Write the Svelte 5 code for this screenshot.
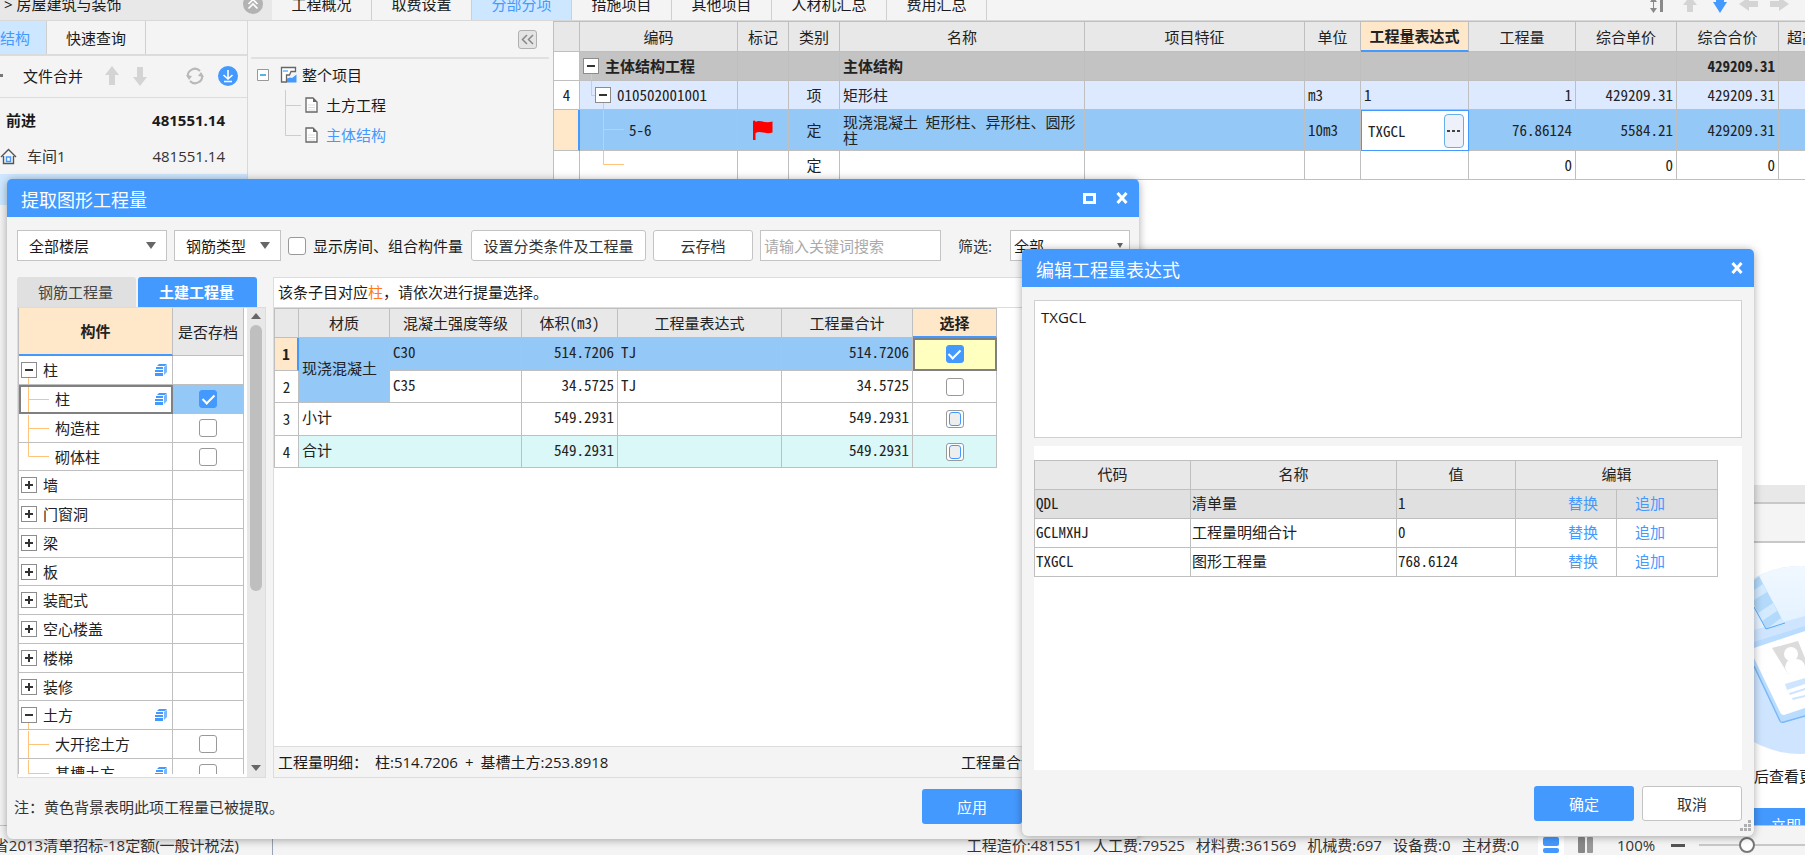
<script lang="ts">
	type Item = {
		name: string;
		state: 'open' | 'closed' | 'child' | 'last';
		icon?: boolean;
		checked?: boolean;
		active?: boolean;
	};

	const tabs = ['工程概况', '取费设置', '分部分项', '措施项目', '其他项目', '人材机汇总', '费用汇总'];
	let activeTab = $state('分部分项');

	let components: Item[] = $state([
		{ name: '柱', state: 'open', icon: true },
		{ name: '柱', state: 'child', icon: true, checked: true, active: true },
		{ name: '构造柱', state: 'child', checked: false },
		{ name: '砌体柱', state: 'last', checked: false },
		{ name: '墙', state: 'closed' },
		{ name: '门窗洞', state: 'closed' },
		{ name: '梁', state: 'closed' },
		{ name: '板', state: 'closed' },
		{ name: '装配式', state: 'closed' },
		{ name: '空心楼盖', state: 'closed' },
		{ name: '楼梯', state: 'closed' },
		{ name: '装修', state: 'closed' },
		{ name: '土方', state: 'open', icon: true },
		{ name: '大开挖土方', state: 'child', checked: false },
		{ name: '基槽土方', state: 'child', icon: true, checked: false }
	]);

	// connector lines of the component tree, one path per row kind
	const lines = {
		open: 'M9.5 20V29',
		closed: '',
		child: 'M9.5 0V29M9.5 13.5H30',
		last: 'M9.5 0V13.5H30'
	};

	const codes = [
		{ code: 'QDL', name: '清单量', value: '1' },
		{ code: 'GCLMXHJ', name: '工程量明细合计', value: '0' },
		{ code: 'TXGCL', name: '图形工程量', value: '768.6124' }
	];

	const costs = [
		['工程造价', '481551'],
		['人工费', '79525'],
		['材料费', '361569'],
		['机械费', '697'],
		['设备费', '0'],
		['主材费', '0']
	];

	let expression = $state('TXGCL');
	let keyword = $state('');
	let zoom = $state(28);

	function replace(code: string) {
		expression = code;
	}

	function append(code: string) {
		expression += '+' + code;
	}
</script>

<div class="app">
	<header class="topbar">
		<div class="crumb">
			<span>&gt; 房屋建筑与装饰</span>
			<button class="round" aria-label="收起">
				<svg width="20" height="20" viewBox="0 0 20 20">
					<circle cx="10" cy="10" r="10" fill="#b3b3b3" />
					<path d="M5.500 10L10 5.500L14.500 10M5.500 14.500L10 10L14.500 14.500" fill="none" stroke="#fff" stroke-width="1.600" />
				</svg>
			</button>
		</div>
		<nav class="tabs">
			{#each tabs as tab}
				<button class:on={tab === activeTab} class:wide={tab.length > 4} onclick={() => (activeTab = tab)}>{tab}</button>
			{/each}
		</nav>
		<div class="tools">
			<svg width="140" height="20" viewBox="0 0 140 20">
				<path d="M0 2L3.500 -3L7 2ZM0 8L3.500 13L7 8Z" fill="#8a8a8a" />
				<path d="M3.500 0V10" stroke="#8a8a8a" />
				<path d="M10 0H13V12H10Z" fill="#8a8a8a" />
				<path d="M33 5L40 -4L47 5H43V12H37V5Z" fill="#d4d4d4" />
				<path d="M63 2H66V0H74V2H77L70 13Z" fill="#4499ff" />
				<path d="M89 4L99 -3V1H108V7H99V11Z" fill="#d4d4d4" />
				<path d="M139 4L129 -3V1H120V7H129V11Z" fill="#d4d4d4" />
			</svg>
		</div>
	</header>

	<main class="work">
		<section class="project">
			<div class="subtabs">
				<button class="on">结构</button>
				<button>快速查询</button>
			</div>
			<div class="filebar">
				<span class="caret"></span>
				<button class="merge">文件合并</button>
				<svg width="14" height="20" viewBox="0 0 14 20"><path d="M7 0L14 9H10V19H4V9H0Z" fill="#d4d4d4" /></svg>
				<svg width="14" height="20" viewBox="0 0 14 20"><path d="M7 20L14 11H10V1H4V11H0Z" fill="#d4d4d4" /></svg>
				<svg class="refresh" width="18" height="18" viewBox="0 0 18 18">
					<path d="M2 10A7 7 0 0 1 14 4M16 8A7 7 0 0 1 4 14" fill="none" stroke="#b8b8b8" stroke-width="2" />
					<path d="M0 8L3 13L6 9ZM18 10L15 5L12 9Z" fill="#b8b8b8" />
				</svg>
				<svg width="20" height="20" viewBox="0 0 20 20">
					<circle cx="10" cy="10" r="10" fill="#4499ff" />
					<path d="M10 4V13M5.500 9L10 13L14.500 9M6 15.500H14" fill="none" stroke="#fff" stroke-width="1.600" />
				</svg>
			</div>
			<div class="prow strong"><span>前进</span><span>481551.14</span></div>
			<div class="prow">
				<svg width="17" height="17" viewBox="0 0 17 17">
					<path d="M1 9L8.500 1.500L16 9M3.500 8V15.500H13.500V8" fill="none" stroke="#555" stroke-width="1.400" />
					<path d="M6.500 9H10.500V13.500H6.500Z" fill="#fff" stroke="#4499ff" stroke-width="1.400" />
				</svg>
				<span>车间1</span><span>481551.14</span>
			</div>
			<div class="prow picked"></div>
		</section>

		<section class="outline">
			<div class="outhead">
				<button aria-label="折叠">
					<svg width="13" height="11" viewBox="0 0 13 11"><path d="M6 1L1.500 5.500L6 10M12 1L7.500 5.500L12 10" fill="none" stroke="#888" stroke-width="1.500" /></svg>
				</button>
			</div>
			<div class="node root">
				<svg width="12" height="12" viewBox="0 0 12 12"><path d="M.5.5H11.500V11.500H.5Z" fill="#fff" stroke="#999" /><path d="M3 6H9" stroke="#1a9de0" stroke-width="1.500" /></svg>
				<svg class="proj" width="17" height="17" viewBox="0 0 17 17">
					<path d="M7 16H1.500V1.500H15.500V5.500H11L9.500 9H6.500V16" fill="#fff" stroke="#666" stroke-width="1.300" />
					<path d="M3 4H8V6H3Z" fill="#8cc4ff" />
					<path d="M7 16.500V12.500L10 11.500L12 12L16.500 8.500V16.500Z" fill="#4499ff" />
				</svg>
				<span>整个项目</span>
			</div>
			<div class="branch">
				<svg width="17" height="60" viewBox="0 0 17 60"><path d="M1.500 0V45.500H17M1.500 15.500H17" fill="none" stroke="#ffc37a" /></svg>
				<div>
					{#each ['土方工程', '主体结构'] as leaf, i}
						<div class="node" class:current={i === 1}>
							<svg width="13" height="16" viewBox="0 0 13 16">
								<path d="M1 1H8L12 5V15H1Z" fill="#fff" stroke="#666" stroke-width="1.300" />
								<path d="M8 1V5H12Z" fill="#666" />
								<path d="M3 8H10M3 10.500H10M3 13H10" stroke="#ddd" />
							</svg>
							<span>{leaf}</span>
						</div>
					{/each}
				</div>
			</div>
		</section>

		<section class="sheet">
			<table class="grid bill">
				<colgroup>
					<col class="w26" /><col class="w158" /><col class="w51" /><col class="w51" /><col class="w245" /><col class="w220" />
					<col class="w56" /><col class="w108" /><col class="w107" /><col class="w101" /><col class="w102" /><col class="w107" />
				</colgroup>
				<thead>
					<tr>
						<th></th><th>编码</th><th>标记</th><th>类别</th><th>名称</th><th>项目特征</th><th>单位</th>
						<th class="hot">工程量表达式</th><th>工程量</th><th>综合单价</th><th>综合合价</th><th>超高过滤类别</th>
					</tr>
				</thead>
				<tbody>
					<tr class="sum">
						<td class="no"></td>
						<td class="treecell">
							<div class="tree">
								<svg width="50" height="28"><path d="M11.500 20V28" /></svg>
								<div class="label"><button class="toggle" aria-label="折叠"></button>主体结构工程</div>
							</div>
						</td>
						<td></td><td></td><td>主体结构</td><td></td><td></td><td></td><td></td><td></td><td class="num">429209.31</td><td></td>
					</tr>
					<tr class="item">
						<td class="no">4</td>
						<td class="treecell">
							<div class="tree">
								<svg width="50" height="28"><path d="M11.500 0V14.500H16M23.500 20V28" /></svg>
								<div class="label l2"><button class="toggle" aria-label="折叠"></button>010502001001</div>
							</div>
						</td>
						<td></td><td class="mid">项</td><td>矩形柱</td><td></td><td>m3</td><td>1</td><td class="num">1</td>
						<td class="num">429209.31</td><td class="num">429209.31</td><td></td>
					</tr>
					<tr class="tall">
						<td class="no mark"></td>
						<td class="treecell">
							<div class="tree">
								<svg width="50" height="40"><path d="M23.500 0V40M23.500 19.500H44" /></svg>
								<div class="label l3">5-6</div>
							</div>
						</td>
						<td class="mid">
							<svg class="flag" width="20" height="20" viewBox="0 0 20 20"><path d="M0 1Q1 0 2.500 1V2C7 -1 11 4 19.500 1.500V12.500C12 15 8 10 2.500 13V20H0Z" fill="#f00" /></svg>
						</td>
						<td class="mid">定</td><td class="wrap">现浇混凝土 矩形柱、异形柱、圆形柱</td><td></td><td>10m3</td>
						<td class="edit">
							<div>
								<span>TXGCL</span>
								<button aria-label="编辑表达式">
									<svg width="14" height="4" viewBox="0 0 14 4"><path d="M0 1H3V3H0ZM5 1H8V3H5ZM10 1H13V3H10Z" fill="#444" /></svg>
								</button>
							</div>
						</td>
						<td class="num">76.86124</td><td class="num">5584.21</td><td class="num">429209.31</td><td></td>
					</tr>
					<tr>
						<td class="no"></td>
						<td class="treecell"><div class="tree"><svg width="50" height="28"><path d="M23.500 0V13.500H44" /></svg></div></td>
						<td></td><td class="mid">定</td><td></td><td></td><td></td><td></td><td class="num">0</td><td class="num">0</td><td class="num">0</td><td></td>
					</tr>
				</tbody>
			</table>
			<div class="detail">
				<div class="splitter"></div>
				<div class="detailbar"></div>
				<aside>
					<svg width="51" height="190" viewBox="0 0 51 190">
						<defs>
							<linearGradient id="sky" x1="0" y1="0" x2="0" y2="1"><stop offset="0" stop-color="#f1f8ff" /><stop offset="1" stop-color="#e2f1ff" /></linearGradient>
							<clipPath id="disc"><circle cx="46" cy="94" r="94" /></clipPath>
						</defs>
						<g clip-path="url(#disc)">
							<rect width="51" height="190" fill="#cfe5ff" />
							<path d="M0 0H51V50L0 64Z" fill="url(#sky)" />
							<path d="M0 14L5 10L31 59L12 63L0 39Z" fill="#b3dafa" />
							<path d="M0 24L9 18L13 26L0 34ZM4 47L19 37L23 45L8 55ZM14 62L27 52L31 59Z" fill="#d3eaff" />
							<path d="M0 41L12 63L31 57" fill="none" stroke="#55a8f8" />
							<path d="M0 76L51 60V150L28 157L0 102Z" fill="#b9dcff" />
							<path d="M0 82L51 65V142L30 149Q27 149 26 146L0 92Z" fill="#fff" />
							<path d="M0 100L26 155Q27 157 30 156L51 150" fill="none" stroke="#7ab8f8" stroke-width="1.500" />
							<path d="M18 82L44 75L51 92V102L34 108Z" fill="#dcdcdc" />
							<path d="M31 102Q32 92 40 93Q49 92 51 100V104L34 108Z" fill="#fff" />
							<circle cx="37" cy="88" r="7" fill="#fff" />
							<path d="M31 118L51 112V118L33 124ZM35 127L51 122V124L36 129ZM38 132L51 129V131L39 134Z" fill="#cfe5ff" />
						</g>
					</svg>
					<p>后查看更多</p>
					<button>立即</button>
				</aside>
			</div>
		</section>
	</main>

	<footer class="status">
		<div class="rule"><span>省2013清单招标-18定额(一般计税法)</span></div>
		<div class="costs">
			{#each costs as [name, value]}
				<span>{name}:{value}</span>
			{/each}
		</div>
		<button class="view on" aria-label="上下视图">
			<svg width="16" height="16" viewBox="0 0 16 16"><rect width="16" height="9" rx="2" fill="#4499ff" /><rect y="11" width="16" height="5" rx="2" fill="#4499ff" /></svg>
		</button>
		<button class="view" aria-label="左右视图">
			<svg width="15" height="16" viewBox="0 0 15 16"><rect width="7" height="16" rx="1" fill="#888" /><rect x="9" width="6" height="16" rx="1" fill="#999" /></svg>
		</button>
		<span class="percent">100%</span>
		<button class="minus" aria-label="缩小"></button>
		<input class="slider" type="range" min="0" max="100" bind:value={zoom} aria-label="缩放" />
	</footer>
</div>

<div class="dialog extract" role="dialog" aria-label="提取图形工程量">
	<div class="title">
		<h2>提取图形工程量</h2>
		<button aria-label="最大化"><svg width="13" height="11" viewBox="0 0 13 11"><path d="M1.500 1.500H11.500V9.500H1.500Z" fill="none" stroke="#fff" stroke-width="3" /></svg></button>
		<button aria-label="关闭"><svg width="12" height="12" viewBox="0 0 12 12"><path d="M1.500 1L10.500 11M10.500 1L1.500 11" stroke="#fff" stroke-width="3" /></svg></button>
	</div>
	<div class="filters">
		<span class="select floor"><select aria-label="楼层"><option>全部楼层</option></select></span>
		<span class="select steel"><select aria-label="钢筋类型"><option>钢筋类型</option></select></span>
		<label class="room"><input type="checkbox" />显示房间、组合构件量</label>
		<button class="btn setup">设置分类条件及工程量</button>
		<button class="btn">云存档</button>
		<input class="search" type="text" placeholder="请输入关键词搜索" aria-label="关键词" bind:value={keyword} />
		<label class="pick" for="pick">筛选:</label>
		<span class="select all"><select id="pick"><option>全部</option></select></span>
	</div>
	<div class="panes">
		<div class="left">
			<div class="kinds">
				<button>钢筋工程量</button>
				<button class="on">土建工程量</button>
			</div>
			<div class="listbox">
				<div class="scroller">
					<table class="grid parts">
						<colgroup><col class="w154" /><col class="w71" /></colgroup>
						<thead><tr><th class="hot">构件</th><th>是否存档</th></tr></thead>
						<tbody>
							{#each components as item}
								<tr class:active={item.active}>
									<td class="treecell">
										<div class="tree">
											<svg width="40" height="28"><path d={lines[item.state]} /></svg>
											<div class="label" class:leaf={item.checked !== undefined}>
												{#if item.checked === undefined}
													<button class="toggle" class:plus={item.state === 'closed'} aria-label="展开"></button>
												{/if}
												<span>{item.name}</span>
												{#if item.icon}
													<svg class="stack" width="12" height="12" viewBox="0 0 12 12">
														<path d="M2 2L4 0H12L10 2ZM1 3H8V5H1ZM0 6H8V8H0ZM0 9H8V12H0Z" fill="#4499ff" />
														<path d="M9 3L12 1V8L9 11Z" fill="#78b6ff" />
													</svg>
												{/if}
											</div>
										</div>
									</td>
									<td class="mid">
										{#if item.checked !== undefined}
											<input type="checkbox" aria-label={item.name} bind:checked={item.checked} />
										{/if}
									</td>
								</tr>
							{/each}
						</tbody>
					</table>
				</div>
				<div class="scrollbar"><i class="up"></i><i class="thumb"></i><i class="down"></i></div>
			</div>
		</div>
		<div class="right">
			<p class="hint">该条子目对应<em>柱</em>，请依次进行提量选择。</p>
			<div class="result">
				<table class="grid qty">
					<colgroup>
						<col class="w24" /><col class="w91" /><col class="w132" /><col class="w96" /><col class="w164" /><col class="w131" /><col class="w84" />
					</colgroup>
					<thead>
						<tr><th></th><th>材质</th><th>混凝土强度等级</th><th>体积(m3)</th><th>工程量表达式</th><th>工程量合计</th><th class="hot">选择</th></tr>
					</thead>
					<tbody>
						<tr class="blue">
							<td class="no mark">1</td><td rowspan="2" class="blue">现浇混凝土</td><td>C30</td><td class="num">514.7206</td><td>TJ</td><td class="num">514.7206</td>
							<td class="mid chosen"><input type="checkbox" checked aria-label="C30" /></td>
						</tr>
						<tr>
							<td class="no">2</td><td>C35</td><td class="num">34.5725</td><td>TJ</td><td class="num">34.5725</td>
							<td class="mid"><input type="checkbox" aria-label="C35" /></td>
						</tr>
						<tr>
							<td class="no">3</td><td colspan="2">小计</td><td class="num">549.2931</td><td></td><td class="num">549.2931</td>
							<td class="mid"><input class="part" type="checkbox" aria-label="小计" /></td>
						</tr>
						<tr class="total">
							<td class="no">4</td><td colspan="2">合计</td><td class="num">549.2931</td><td></td><td class="num">549.2931</td>
							<td class="mid"><input class="part" type="checkbox" aria-label="合计" /></td>
						</tr>
					</tbody>
				</table>
			</div>
			<div class="formula">
				<span>工程量明细：</span><span>柱:514.7206</span><span>+</span><span>基槽土方:253.8918</span><span class="sumup">工程量合计</span>
			</div>
		</div>
	</div>
	<div class="actions">
		<p>注：黄色背景表明此项工程量已被提取。</p>
		<button class="btn primary">应用</button>
	</div>
</div>

<div class="dialog editor" role="dialog" aria-label="编辑工程量表达式">
	<div class="title">
		<h2>编辑工程量表达式</h2>
		<button aria-label="关闭"><svg width="12" height="12" viewBox="0 0 12 12"><path d="M1.500 1L10.500 11M10.500 1L1.500 11" stroke="#fff" stroke-width="3" /></svg></button>
	</div>
	<div class="body">
		<textarea aria-label="工程量表达式" spellcheck="false" bind:value={expression}></textarea>
		<div class="codes">
			<table class="grid vars">
				<colgroup><col class="w156" /><col class="w206" /><col class="w119" /><col class="w101" /><col class="w101" /></colgroup>
				<thead><tr><th>代码</th><th>名称</th><th>值</th><th colspan="2">编辑</th></tr></thead>
				<tbody>
					{#each codes as row, i}
						<tr class:grey={i === 0}>
							<td>{row.code}</td><td>{row.name}</td><td>{row.value}</td>
							<td class="num"><button class="link" onclick={() => replace(row.code)}>替换</button></td>
							<td><button class="link" onclick={() => append(row.code)}>追加</button></td>
						</tr>
					{/each}
				</tbody>
			</table>
		</div>
		<div class="confirm">
			<button class="btn primary">确定</button>
			<button class="btn">取消</button>
		</div>
	</div>
	<svg class="grip" width="12" height="12" viewBox="0 0 12 12"><path d="M8 0H11V3H8ZM8 4H11V7H8ZM4 4H7V7H4ZM8 8H11V11H8ZM4 8H7V11H4ZM0 8H3V11H0Z" fill="#b0b0b0" /></svg>
</div>

<style>
	:global(body) {
		background: #f4f4f4;
		color: #1a1a1a;
		font: 15px/20px 'Open Sans', 'Noto Sans CJK SC', sans-serif;
		overflow: hidden;
	}

	* {
		box-sizing: border-box;
	}

	button {
		padding: 0;
		border: 0;
		background: none;
		color: inherit;
		font: inherit;
		white-space: nowrap;
	}

	svg {
		display: block;
		flex: none;
	}

	p,
	h2 {
		margin: 0;
	}

	.app {
		display: flex;
		flex-direction: column;
		height: 100vh;
	}

	.topbar {
		display: flex;
		flex: none;
		align-items: flex-end;
		height: 21px;
		overflow: hidden;
		border-bottom: 1px solid #d8d8d8;
	}

	.crumb {
		display: flex;
		justify-content: space-between;
		align-items: center;
		width: 272px;
		height: 32px;
		padding: 0 9px 0 4px;
		background: #e8e8e8;
	}

	.tabs {
		display: flex;
	}

	.tabs button {
		width: 100px;
		height: 32px;
		border-right: 1px solid #cfcfcf;
	}

	.tabs .wide {
		width: 115px;
	}

	.tabs .on {
		background: #cce7ff;
		color: #4499ff;
	}

	.tools {
		margin-left: auto;
		padding-right: 15px;
	}

	.work {
		display: flex;
		flex: 1;
		min-height: 0;
	}

	.project {
		width: 248px;
		border-right: 1px solid #d8d8d8;
	}

	.subtabs {
		display: flex;
		height: 35px;
		border-bottom: 2px solid #dcdcdc;
	}

	.subtabs button {
		width: 99px;
		border-right: 1px solid #cfcfcf;
	}

	.subtabs .on {
		width: 47px;
		padding-right: 20px;
		background: #cce7ff;
		color: #4499ff;
	}

	.filebar {
		display: flex;
		align-items: center;
		gap: 14px;
		height: 42px;
		padding: 0 9px 2px 0;
		border-bottom: 1px solid #dcdcdc;
	}

	.caret {
		width: 3px;
		height: 3px;
		background: #777;
	}

	.merge {
		padding: 0 8px 0 6px;
	}

	.refresh {
		margin-left: auto;
	}

	.prow {
		display: flex;
		align-items: center;
		gap: 10px;
		padding: 0 22px 0 0;
		color: #333;
	}

	.prow span:last-child {
		margin-left: auto;
	}

	.strong {
		height: 33px;
		margin-top: 5px;
		padding-left: 6px;
		color: #1a1a1a;
		font-weight: bold;
	}

	.strong + .prow {
		height: 38px;
		padding-top: 2px;
	}

	.picked {
		height: 31px;
		background: #cce7ff;
	}

	.outline {
		width: 305px;
		padding: 0 4px 0 3px;
	}

	.outhead {
		display: flex;
		justify-content: flex-end;
		height: 38px;
		padding: 9px 12px 0 0;
		border-bottom: 2px solid #e0e0e0;
	}

	.outhead button {
		display: grid;
		place-content: center;
		width: 19px;
		height: 19px;
		border: 1px solid #b0b0b0;
		border-radius: 3px;
		background: #e4e4e4;
	}

	.node {
		display: flex;
		align-items: center;
		gap: 8px;
		height: 30px;
	}

	.root {
		padding-left: 6px;
		gap: 5px;
		height: 31px;
	}

	.proj {
		margin-left: 6px;
	}

	.branch {
		display: flex;
		gap: 4px;
		padding-left: 33px;
	}

	.current {
		color: #4499ff;
	}

	.sheet {
		display: flex;
		flex: 1;
		flex-direction: column;
		min-width: 0;
		overflow: hidden;
		background: #fff;
	}

	/* data grids */
	.grid {
		table-layout: fixed;
		border-spacing: 0;
		border-top: 1px solid #bfbfbf;
		border-left: 1px solid #bfbfbf;
		background: #fff;
		color: #222;
		font: 15px/16px 'Noto Sans Mono CJK SC', 'Noto Sans CJK SC', monospace;
	}

	.grid th,
	.grid td {
		padding: 0 3px;
		overflow: hidden;
		border-right: 1px solid #bfbfbf;
		border-bottom: 1px solid #bfbfbf;
		text-align: left;
		white-space: nowrap;
	}

	.grid th {
		background: #e8e8e8;
		font-weight: normal;
		text-align: center;
	}

	.grid .hot {
		padding: 0;
		border-bottom: 2px solid #4499ff;
		background: #ffe7ca;
		font-weight: bold;
	}

	.grid .num {
		text-align: right;
	}

	.grid .mid {
		text-align: center;
	}

	.grid .no {
		padding: 0;
		background: #fff;
		text-align: center;
	}

	.grid .mark {
		border-right: 2px solid #4499ff;
		background: #ffe7ca;
		font-weight: bold;
	}

	.grid .treecell {
		padding: 0;
	}

	.grid .wrap {
		white-space: normal;
	}

	.tree {
		display: grid;
	}

	.tree > * {
		grid-area: 1 / 1;
	}

	.tree > svg path {
		fill: none;
		stroke: #ffc37a;
	}

	.label {
		display: flex;
		align-items: center;
		gap: 6px;
		padding-left: 3px;
	}

	.l2 {
		padding-left: 15px;
	}

	.l3 {
		padding-left: 49px;
	}

	.toggle {
		display: grid;
		place-content: center;
		flex: none;
		width: 16px;
		height: 16px;
		border: 1px solid #8c8c8c;
		background: #fff;
	}

	.toggle::before,
	.toggle::after {
		grid-area: 1 / 1;
		place-self: center;
		width: 8px;
		height: 2px;
		background: #333;
		content: '';
	}

	.toggle.plus::after {
		width: 2px;
		height: 8px;
	}

	.bill {
		width: 1333px;
	}

	.bill tr {
		height: 29px;
	}

	.bill thead tr {
		height: 30px;
	}

	.bill .tall {
		height: 41px;
		background: #94c8f7;
	}

	.bill .sum {
		background: #c3c3c3;
		font-weight: bold;
	}

	.bill .item {
		background: #dde9ff;
	}

	.flag {
		margin: 0 auto;
	}

	.grid .edit {
		padding: 0;
		border: 1px solid #4499ff;
		background: #fff;
	}

	.edit div {
		display: flex;
		justify-content: space-between;
		align-items: center;
		padding: 0 4px 0 6px;
	}

	.edit button {
		display: grid;
		place-content: center;
		width: 20px;
		height: 34px;
		border: 1px solid #66aee8;
		border-radius: 4px;
		background: #eef1f9;
	}

	.detail {
		display: flex;
		flex-direction: column;
		height: 340px;
		margin-top: auto;
		overflow: hidden;
	}

	.splitter {
		flex: none;
		height: 19px;
		border-bottom: 2px solid #c8c8c8;
		background: #e8e8e8;
	}

	.detailbar {
		flex: none;
		height: 39px;
		border-bottom: 2px solid #c8c8c8;
		background: #f4f4f4;
	}

	.detail aside {
		width: 51px;
		margin: 23px 0 0 auto;
		white-space: nowrap;
	}

	.detail p {
		margin: 10px 0 22px;
	}

	.detail button {
		width: 51px;
		height: 34px;
		padding-left: 17px;
		background: #4499ff;
		color: #fff;
		text-align: left;
	}

	.status {
		display: flex;
		flex: none;
		align-items: flex-end;
		height: 30px;
		overflow: hidden;
		border-top: 1px solid #c4c4c4;
		background: #f4f4f4;
		color: #333;
	}

	.rule {
		display: flex;
		justify-content: flex-end;
		width: 273px;
		height: 20px;
		padding-right: 33px;
		border-right: 1px solid #99a3b3;
		white-space: nowrap;
	}

	.costs {
		display: flex;
		gap: 11px;
		margin-left: auto;
		padding-right: 19px;
	}

	.view {
		display: grid;
		place-content: center;
		width: 26px;
		height: 20px;
		margin-right: 8px;
	}

	.view.on {
		background: #fff;
	}

	.percent {
		width: 54px;
		margin-left: 11px;
	}

	.minus {
		width: 14px;
		height: 3px;
		margin: 0 14px 8px 0;
		background: #555;
	}

	.slider {
		width: 160px;
		height: 18px;
		margin: 0 -54px 1px 0;
		appearance: none;
		background: linear-gradient(#c8c8c8, #c8c8c8) center / 100% 2px no-repeat;
	}

	.slider::-webkit-slider-thumb {
		width: 16px;
		height: 16px;
		border: 2px solid #777;
		border-radius: 50%;
		appearance: none;
		background: #fff;
	}

	/* windows floating over the workspace */
	.dialog {
		position: absolute;
		display: flex;
		flex-direction: column;
		border-radius: 6px;
		background: #f4f4f4;
		box-shadow: 0 1px 9px rgba(0, 0, 0, 0.35);
	}

	.extract {
		top: 179px;
		left: 7px;
		width: 1132px;
		height: 660px;
	}

	.editor {
		top: 249px;
		left: 1022px;
		width: 732px;
		height: 587px;
	}

	.title {
		display: flex;
		flex: none;
		align-items: center;
		gap: 20px;
		height: 38px;
		padding: 0 11px 0 14px;
		border-radius: 5px 5px 0 0;
		background: #4499ff;
		color: #fff;
	}

	h2 {
		flex: 1;
		padding-top: 3px;
		font-size: 18px;
		font-weight: normal;
		line-height: 24px;
	}

	.filters {
		display: flex;
		align-items: center;
		gap: 7px;
		padding: 13px 9px 16px 10px;
	}

	.select {
		display: grid;
		align-items: center;
	}

	.select::after {
		grid-area: 1 / 1;
		justify-self: end;
		margin-right: 11px;
		border: 5px solid transparent;
		border-top: 7px solid #666;
		border-bottom: 0;
		content: '';
		pointer-events: none;
	}

	select {
		grid-area: 1 / 1;
		width: 100%;
		height: 31px;
		padding: 0 11px;
		border: 1px solid #c4c4c4;
		border-radius: 0;
		appearance: none;
		background: #fff;
		color: inherit;
		font: inherit;
	}

	.floor {
		width: 150px;
	}

	.steel {
		width: 107px;
	}

	.all {
		width: 120px;
	}

	.all select {
		padding: 0 3px;
	}

	.all::after {
		margin-right: 7px;
		border-width: 5px 3px 0;
	}

	.room {
		display: flex;
		align-items: center;
		gap: 7px;
		white-space: nowrap;
	}

	input[type='checkbox'] {
		display: inline-grid;
		place-content: center;
		width: 18px;
		height: 18px;
		margin: 0;
		border: 1px solid #999;
		border-radius: 3px;
		appearance: none;
		background: #fff;
		vertical-align: middle;
	}

	input[type='checkbox']:checked {
		border-color: #4499ff;
		background: #4499ff;
	}

	input[type='checkbox']:checked::before {
		width: 5px;
		height: 10px;
		margin-bottom: 3px;
		border: solid #fff;
		border-width: 0 2px 2px 0;
		content: '';
		transform: rotate(45deg);
	}

	input.part::before {
		width: 10px;
		height: 12px;
		border: 1px solid #4499ff;
		border-radius: 3px;
		background: #eee;
		content: '';
	}

	.btn {
		width: 100px;
		height: 31px;
		border: 1px solid #c4c4c4;
		border-radius: 3px;
		background: #fff;
		color: #333;
	}

	.setup {
		width: 175px;
		margin-left: 1px;
	}

	.primary {
		height: 35px;
		border: 0;
		background: #4499ff;
		color: #fff;
	}

	.search {
		width: 181px;
		height: 31px;
		padding: 0 3px;
		border: 1px solid #c4c4c4;
		font: inherit;
	}

	.search::placeholder {
		color: #aaa;
	}

	.pick {
		margin: 0 6px 0 10px;
		flex: 1;
		color: #333;
	}

	.panes {
		display: flex;
		flex: 1;
		gap: 7px;
		min-height: 0;
		padding: 0 7px 0 10px;
	}

	.left {
		display: flex;
		flex-direction: column;
		width: 249px;
	}

	.kinds {
		display: flex;
		gap: 2px;
	}

	.kinds button {
		width: 119px;
		height: 30px;
		padding-right: 2px;
		border-radius: 3px 3px 0 0;
		background: #e0e0e0;
		color: #444;
	}

	.kinds .on {
		background: #4499ff;
		color: #fff;
		font-weight: bold;
	}

	.listbox {
		display: flex;
		flex: 1;
		justify-content: space-between;
		min-height: 0;
		border: 1px solid #dcdcdc;
		background: #fff;
	}

	.scroller {
		margin-bottom: 3px;
		overflow: hidden;
	}

	.parts {
		width: 226px;
		border-top: 0;
		font-family: 'Open Sans', 'Noto Sans CJK SC', sans-serif;
	}

	.parts tr {
		height: 29px;
	}

	.parts tbody tr:nth-child(4n) {
		height: 28px;
	}

	.parts thead tr {
		height: 48px;
	}

	.parts .label {
		gap: 6px;
		padding: 0 5px 0 2px;
	}

	.parts .leaf {
		padding-left: 36px;
	}

	.label .stack {
		margin-left: auto;
	}

	.tree > svg {
		height: 27px;
	}

	.bill .tree > svg {
		height: 28px;
	}

	.bill .tall .tree > svg {
		height: 40px;
	}

	.active {
		background: #94c8f7;
	}

	.active .treecell {
		outline: 2px solid #808080;
		outline-offset: -2px;
		background: #fff;
	}

	.scrollbar {
		display: flex;
		flex-direction: column;
		align-items: center;
		width: 18px;
		padding: 5px 0 6px;
		background: #e8e8e8;
	}

	.up {
		border: 5px solid transparent;
		border-top: 0;
		border-bottom: 6px solid #666;
	}

	.down {
		margin-top: auto;
		border: 5px solid transparent;
		border-bottom: 0;
		border-top: 6px solid #666;
	}

	.thumb {
		width: 12px;
		height: 58%;
		margin-top: 6px;
		border-radius: 6px;
		background: #bfbfbf;
	}

	.right {
		display: flex;
		flex: 1;
		flex-direction: column;
		border: 1px solid #dcdcdc;
		background: #fff;
	}

	.hint {
		padding: 4px 4px 5px;
		border-bottom: 1px solid #dcdcdc;
	}

	em {
		color: #ff7a1a;
		font-style: normal;
	}

	.result {
		flex: 1;
	}

	.qty {
		width: 723px;
	}

	.qty tbody tr {
		height: 33px;
	}

	.qty tbody tr:nth-child(even) {
		height: 32px;
	}

	.qty thead tr {
		height: 29px;
	}

	.qty tbody td {
		padding-bottom: 4px;
	}

	.qty tbody .mid,
	.qty tbody .no {
		padding-bottom: 0;
	}

	.blue {
		background: #94c8f7;
	}

	.total {
		background: #dbf8f8;
	}

	.chosen {
		outline: 2px solid #808080;
		outline-offset: -2px;
		background: #ffffbf;
	}

	.formula {
		display: flex;
		align-items: center;
		gap: 7px;
		height: 31px;
		padding: 0 75px 0 4px;
		border-top: 1px solid #dcdcdc;
		background: #f4f4f4;
	}

	.sumup {
		margin-left: auto;
		padding-right: 20px;
	}

	.actions {
		display: flex;
		justify-content: space-between;
		align-items: center;
		flex: none;
		height: 61px;
		padding: 0 117px 4px 7px;
		color: #333;
	}

	.body {
		display: flex;
		flex: 1;
		flex-direction: column;
		padding: 13px 12px 15px;
	}

	textarea {
		height: 138px;
		padding: 6px;
		border: 1px solid #d0d0d0;
		background: #fff;
		color: inherit;
		font: inherit;
		resize: none;
	}

	.codes {
		flex: 1;
		margin-top: 8px;
		padding-top: 14px;
		background: #fff;
	}

	.vars {
		width: 684px;
	}

	.vars th,
	.vars td {
		padding: 0 1px 2px;
	}

	.vars tr {
		height: 29px;
	}

	.vars .grey {
		background: #e0e0e0;
	}

	.link {
		padding: 0 17px;
		color: #4499ff;
	}

	.confirm {
		display: flex;
		justify-content: flex-end;
		gap: 8px;
		padding-top: 16px;
	}

	.confirm .btn {
		height: 35px;
	}

	.grip {
		position: absolute;
		right: 2px;
		bottom: 4px;
	}

	.w24 { width: 24px; }
	.w26 { width: 26px; }
	.w51 { width: 51px; }
	.w56 { width: 56px; }
	.w71 { width: 71px; }
	.w84 { width: 84px; }
	.w91 { width: 91px; }
	.w96 { width: 96px; }
	.w101 { width: 101px; }
	.w102 { width: 102px; }
	.w107 { width: 107px; }
	.w108 { width: 108px; }
	.w119 { width: 119px; }
	.w131 { width: 131px; }
	.w132 { width: 132px; }
	.w154 { width: 154px; }
	.w156 { width: 156px; }
	.w158 { width: 158px; }
	.w164 { width: 164px; }
	.w206 { width: 206px; }
	.w220 { width: 220px; }
	.w245 { width: 245px; }
</style>
